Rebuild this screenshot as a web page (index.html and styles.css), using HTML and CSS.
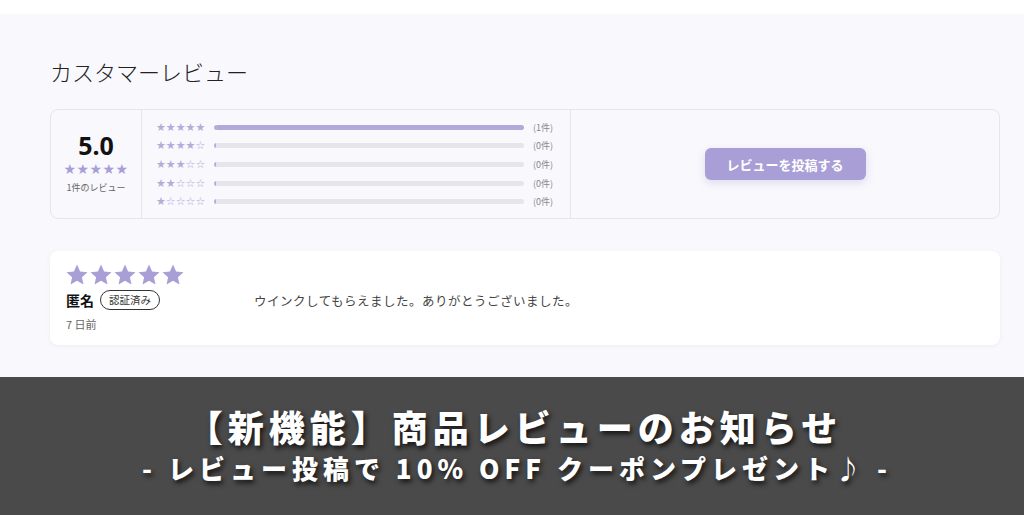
FILE: index.html
```html
<!DOCTYPE html>
<html lang="ja">
<head>
<meta charset="utf-8">
<link rel="stylesheet" href="styles.css">
</head>
<body>
<div class="topband"></div>
<main class="reviews">
  <h2 class="title">カスタマーレビュー</h2>
  <section class="summary">
    <div class="score">
      <div class="score-num">5.0</div>
      <div class="score-stars">★★★★★</div>
      <div class="score-count">1件のレビュー</div>
    </div>
    <div class="dist">
      <div class="row"><span class="rs">★★★★★</span><span class="bar"><span class="fill" style="width:100%"></span></span><span class="cnt">(1件)</span></div>
      <div class="row"><span class="rs">★★★★☆</span><span class="bar"><span class="fill" style="width:0%"></span></span><span class="cnt">(0件)</span></div>
      <div class="row"><span class="rs">★★★☆☆</span><span class="bar"><span class="fill" style="width:0%"></span></span><span class="cnt">(0件)</span></div>
      <div class="row"><span class="rs">★★☆☆☆</span><span class="bar"><span class="fill" style="width:0%"></span></span><span class="cnt">(0件)</span></div>
      <div class="row"><span class="rs">★☆☆☆☆</span><span class="bar"><span class="fill" style="width:0%"></span></span><span class="cnt">(0件)</span></div>
    </div>
    <div class="action">
      <button class="post-btn">レビューを投稿する</button>
    </div>
  </section>
  <article class="review">
    <div class="meta">
      <div class="big-stars">
        <svg viewBox="0 0 24 24"><path d="M12 1.5l3.1 6.9 7.4.8-5.6 5 1.6 7.4L12 17.8l-6.5 3.8 1.6-7.4-5.6-5 7.4-.8z"/></svg>
        <svg viewBox="0 0 24 24"><path d="M12 1.5l3.1 6.9 7.4.8-5.6 5 1.6 7.4L12 17.8l-6.5 3.8 1.6-7.4-5.6-5 7.4-.8z"/></svg>
        <svg viewBox="0 0 24 24"><path d="M12 1.5l3.1 6.9 7.4.8-5.6 5 1.6 7.4L12 17.8l-6.5 3.8 1.6-7.4-5.6-5 7.4-.8z"/></svg>
        <svg viewBox="0 0 24 24"><path d="M12 1.5l3.1 6.9 7.4.8-5.6 5 1.6 7.4L12 17.8l-6.5 3.8 1.6-7.4-5.6-5 7.4-.8z"/></svg>
        <svg viewBox="0 0 24 24"><path d="M12 1.5l3.1 6.9 7.4.8-5.6 5 1.6 7.4L12 17.8l-6.5 3.8 1.6-7.4-5.6-5 7.4-.8z"/></svg>
      </div>
      <div class="author"><span class="name">匿名</span><span class="badge">認証済み</span></div>
      <div class="date">7 日前</div>
    </div>
    <p class="body">ウインクしてもらえました。ありがとうございました。</p>
  </article>
</main>
<footer class="banner">
  <div class="b-title">【新機能】商品レビューのお知らせ</div>
  <div class="b-sub">- レビュー投稿で 10% OFF クーポンプレゼント♪ -</div>
</footer>
</body>
</html>
```
FILE: styles.css
```css
* { box-sizing: border-box; }
html, body { margin: 0; padding: 0; }
body {
  width: 1024px;
  height: 515px;
  overflow: hidden;
  font-family: "Noto Sans CJK JP", "Noto Sans", sans-serif;
  background: #fff;
  color: #222;
}
.topband { height: 14px; background: #ffffff; }
.reviews {
  background: #f8f8fd;
  height: 363px;
  padding: 42px 24px 0 50px;
}
.title {
  margin: 0;
  font-size: 22px;
  font-weight: 300;
  line-height: 30px;
  color: #222;
}
.summary {
  margin-top: 23px;
  width: 950px;
  height: 110px;
  border: 1px solid #e6e6ef;
  border-radius: 8px;
  display: flex;
  background: #f8f8fd;
}
.score {
  width: 91px;
  border-right: 1px solid #e6e6ef;
  display: flex;
  flex-direction: column;
  align-items: center;
  padding-top: 20px;
}
.score-num {
  font-family: "Noto Sans", sans-serif;
  font-size: 25px;
  font-weight: 700;
  line-height: 30px;
  color: #111;
}
.score-stars {
  font-family: "DejaVu Sans", sans-serif;
  font-size: 14px;
  line-height: 16px;
  color: #a99fd6;
  letter-spacing: 0.4px;
  margin-top: 1px;
}
.score-count {
  font-size: 9px;
  color: #666;
  line-height: 14px;
  margin-top: 4px;
}
.dist {
  width: 429px;
  border-right: 1px solid #e6e6ef;
  padding: 8px 0 0 14px;
  display: flex;
  flex-direction: column;
}
.row {
  display: flex;
  align-items: center;
  height: 18.6px;
}
.rs {
  font-family: "DejaVu Sans", sans-serif;
  font-size: 11px;
  color: #b4add9;
  width: 58px;
  letter-spacing: 0px;
}
.bar {
  width: 310px;
  height: 5px;
  border-radius: 3px;
  background: #e6e5ec;
  overflow: hidden;
  border-left: 2px solid #b4add9;
}
.fill {
  display: block;
  height: 100%;
  background: #b3a9db;
}
.cnt {
  font-size: 9px;
  color: #888;
  margin-left: 9px;
}
.action {
  flex: 1;
  display: flex;
  align-items: center;
  justify-content: center;
}
.post-btn {
  width: 161px;
  height: 32px;
  border: none;
  border-radius: 6px;
  background: #a99fd6;
  color: #fff;
  font-family: "Noto Sans CJK JP", sans-serif;
  font-weight: 700;
  font-size: 13px;
  box-shadow: 0 3px 8px rgba(120, 110, 170, 0.2);
}
.review {
  margin-top: 32px;
  width: 950px;
  height: 94px;
  background: #fff;
  border-radius: 8px;
  box-shadow: 0 1px 4px rgba(100, 100, 140, 0.08);
  display: flex;
  padding: 12px 16px;
}
.meta { width: 188px; display: flex; flex-direction: column; }
.big-stars { display: flex; gap: 0; height: 24px; margin-left: -1px; }
.big-stars svg { width: 24px; height: 24px; fill: #a99fd6; }
.author { display: flex; align-items: center; margin-top: 3px; gap: 6px; }
.name { font-size: 14px; font-weight: 700; color: #111; }
.badge {
  font-size: 10.5px;
  border: 1px solid #333;
  border-radius: 11px;
  padding: 1px 8px;
  line-height: 16px;
  color: #333;
}
.date { font-size: 11px; color: #666; margin-top: 6px; }
.body {
  margin: 28px 0 0 0;
  font-size: 12.5px;
  color: #444;
  letter-spacing: 0.5px;
}
.banner {
  height: 138px;
  background: #4a4a4a;
  color: #fff;
  display: flex;
  flex-direction: column;
  align-items: center;
  padding-top: 26px;
  font-family: "Noto Sans CJK JP", sans-serif;
  font-weight: 900;
  text-shadow: 2px 3px 5px rgba(0,0,0,0.75);
}
.b-title {
  font-size: 36px;
  line-height: 46px;
  letter-spacing: 5px;
  margin-left: 5px;
}
.b-sub {
  font-size: 26px;
  line-height: 38px;
  letter-spacing: 5px;
  margin-left: 10px;
}
```
